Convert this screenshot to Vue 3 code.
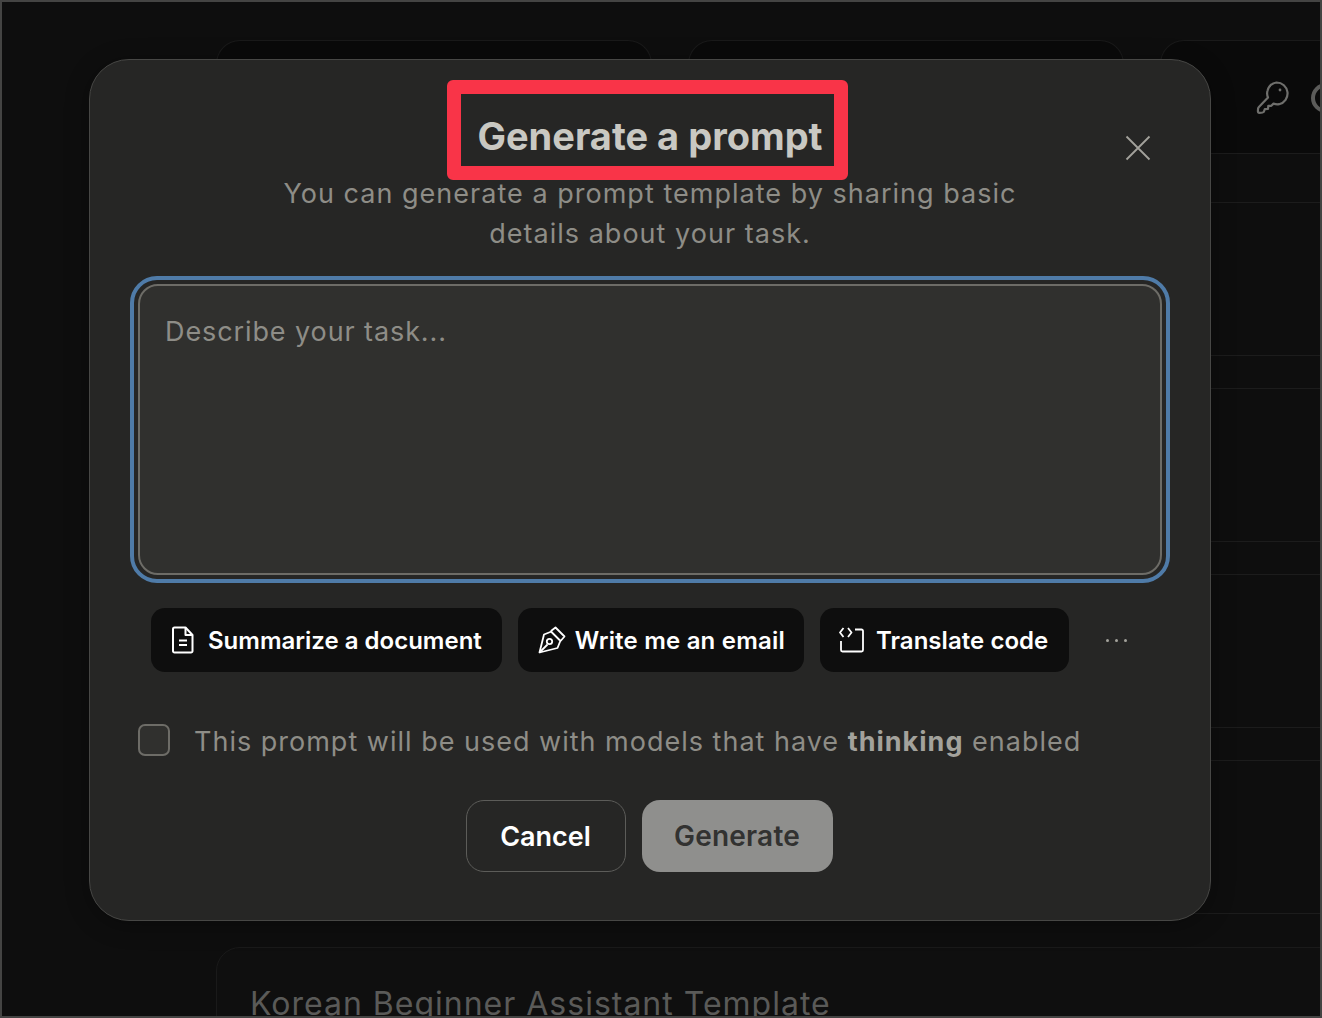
<template>
  <div class="page">
    <div class="backdrop">
      <div class="top-row">
        <div class="bg-card"></div>
        <div class="bg-card"></div>
        <div class="bg-card last">
          <svg class="key" width="36" height="36" viewBox="0 0 36 36" fill="none" stroke="#6f6f6c" stroke-width="2.2" stroke-linejoin="round" stroke-linecap="round">
            <path d="M21.500 2.500a11 11 0 0 1 2.600 21.700c-2 .4-3.700.1-5.600-.6l-2.200 2.200h-3l-.3 3.200-3.200.2-1 2.600c-.6.8-1.800 1-4.300 1-1.200 0-1.600-.7-1.600-1.800l.2-2.500c.1-.6.300-1 .8-1.500L13 17.500c-1-2.400-1.200-4.700-.4-7A11 11 0 0 1 21.500 2.500Z"/>
            <circle cx="25" cy="10" r="1.400" fill="#6f6f6c" stroke="none"/>
          </svg>
          <span class="ring"></span>
        </div>
      </div>
      <div class="rule-gap"></div>
      <div class="rule-block"></div>
      <div class="rule-block"></div>
      <div class="rule-block"></div>
      <div class="rule-block"></div>
      <div class="bottom-card">Korean Beginner Assistant Template</div>
    </div>

    <div class="overlay">
      <section class="dialog">
        <button class="close" aria-label="Close">
          <svg width="26" height="26" viewBox="0 0 26 26" fill="none" stroke="#a3a29c" stroke-width="1.800"><path d="M1.500 1.500l23 23M24.500 1.500l-23 23"/></svg>
        </button>
        <div class="title-box">
          <h2>Generate a prompt</h2>
        </div>
        <p class="subtitle">You can generate a prompt template by sharing basic<br>details about your task.</p>

        <div class="focus-ring">
          <div class="task">Describe your task...</div>
        </div>

        <div class="chips">
          <button class="chip chip-doc">
            <svg width="24" height="28" viewBox="0 0 24 28" fill="none" stroke="#fff" stroke-width="2" stroke-linejoin="round">
              <path d="M3.500 1.500h11l7 7.500v16a1.500 1.500 0 0 1-1.500 1.500H3.500A1.500 1.500 0 0 1 2 25V3a1.500 1.500 0 0 1 1.500-1.500Z"/>
              <path d="M14.500 1.500V9h7M8 14.500h8M8 19h8"/>
            </svg>
            Summarize a document
          </button>
          <button class="chip chip-pen">
            <svg width="28" height="28" viewBox="0 0 28 28" fill="none" stroke="#fff" stroke-width="1.800" stroke-linejoin="round">
              <path d="M17.500 1.500l9 9-3.500 4-1.500-.5-8-8-.2-1.300Z"/>
              <path d="M13.500 5.500L6 8.500 1.500 26.500l18-4.500 3-7.500"/>
              <path d="M1.500 26.500l8-8"/>
              <circle cx="11.500" cy="15.500" r="2.700"/>
            </svg>
            Write me an email
          </button>
          <button class="chip chip-code">
            <svg width="26" height="26" viewBox="0 0 26 26" fill="none" stroke="#fff" stroke-width="1.800" stroke-linejoin="round">
              <path d="M4.500 1L1 5.500 4.500 10M9 1l3.500 4.500L9 10"/>
              <path d="M2 14v9a1.500 1.500 0 0 0 1.500 1.500H22.500a1.500 1.500 0 0 0 1.500-1.500V4a1.500 1.500 0 0 0-1.500-1.500H16"/>
            </svg>
            Translate code
          </button>
          <span class="more" aria-hidden="true"><i></i><i></i><i></i></span>
        </div>

        <label class="thinking">
          <span class="box"></span>
          <span class="thinking-text">This prompt will be used with models that have <b>thinking</b> enabled</span>
        </label>

        <div class="actions">
          <button class="btn cancel">Cancel</button>
          <button class="btn generate">Generate</button>
        </div>
      </section>
    </div>
  </div>
</template>

<script setup>
</script>

<style>
html, body {
  margin: 0;
  background: #0f0f0f;
}
</style>

<style scoped>
.page {
  position: relative;
  box-sizing: border-box;
  width: 1322px;
  height: 1018px;
  overflow: hidden;
  border: 2px solid #444443;
  background: #0e0e0e;
  font-family: Inter, "Liberation Sans", sans-serif;
}

/* dimmed page behind the dialog */
.backdrop {
  padding: 38px 0 0 214px;
}
.top-row {
  display: flex;
  gap: 36px;
  width: 1400px;
}
.bg-card {
  flex: none;
  box-sizing: border-box;
  width: 436px;
  height: 114px;
  border: 1px solid #1a1a1a;
  border-bottom: 0;
  border-radius: 24px 24px 0 0;
  background: #0a0a0a;
}
.bg-card.last {
  display: flex;
  gap: 20px;
  align-items: flex-start;
  padding: 39px 0 0 94px;
  border-bottom: 1px solid #1c1c1c;
}
.ring {
  box-sizing: border-box;
  width: 30px;
  height: 30px;
  margin-top: 3px;
  border: 4px solid #5c5c5a;
  border-radius: 50%;
}
.rule-gap {
  height: 48px;
  border-bottom: 1px solid #1c1c1c;
}
.rule-block {
  position: relative;
  height: 152px;
  margin-bottom: 33px;
  border-bottom: 1px solid #1c1c1c;
}
.rule-block:not(:nth-last-child(2))::after {
  content: "";
  position: absolute;
  left: 0;
  right: 0;
  bottom: -34px;
  border-bottom: 1px solid #1c1c1c;
}
.bottom-card {
  box-sizing: border-box;
  width: 1200px;
  height: 120px;
  padding: 36px 0 0 33px;
  border: 1px solid #1a1a1a;
  border-radius: 24px 0 0 0;
  background: #0f0f0f;
  color: #5a5a58;
  font-size: 32px;
  line-height: 40px;
  letter-spacing: 1px;
  white-space: nowrap;
}

.overlay {
  position: absolute;
  inset: 0;
}
.dialog {
  position: absolute;
  left: 87px;
  top: 57px;
  box-sizing: border-box;
  width: 1122px;
  height: 862px;
  padding: 20px 40px 0;
  border: 1px solid #474745;
  border-radius: 40px;
  background: #262625;
  box-shadow: 0 4px 24px rgba(0, 0, 0, 0.3);
  text-align: center;
}
.close {
  position: absolute;
  right: 59px;
  top: 75px;
  padding: 0;
  border: 0;
  background: none;
  line-height: 0;
}
.title-box {
  box-sizing: border-box;
  width: 401px;
  height: 100px;
  margin-left: 317px;
  padding: 11px 0 0 5px;
  border: 14px solid #f93448;
  border-radius: 6px;
  display: flex;
  align-items: center;
  justify-content: center;
}
h2 {
  margin: 0;
  color: #c9c8c2;
  font-size: 38px;
  font-weight: 700;
  white-space: nowrap;
}
.subtitle {
  margin: -6px 0 0;
  color: #8e8d87;
  font-size: 27px;
  line-height: 40px;
  letter-spacing: 1.02px;
}
.focus-ring {
  box-sizing: border-box;
  height: 307px;
  margin-top: 22px;
  padding: 4px;
  border: 4px solid #4f7ba8;
  border-radius: 27px;
}
.task {
  box-sizing: border-box;
  height: 100%;
  padding: 27px 25px;
  border: 2px solid #6d6c67;
  border-radius: 20px;
  background: #30302e;
  color: #8e8d87;
  font-size: 27px;
  line-height: 38px;
  letter-spacing: 0.9px;
  text-align: left;
}
.chips {
  display: flex;
  gap: 16px;
  align-items: center;
  margin: 25px 0 0 21px;
}
.chip {
  display: flex;
  align-items: center;
  height: 64px;
  padding: 0 20px;
  border: 0;
  border-radius: 14px;
  background: #0e0e0e;
  color: #fff;
  font: 600 24px Inter, "Liberation Sans", sans-serif;
  white-space: nowrap;
}
.chip-doc {
  gap: 13px;
}
.chip-pen {
  gap: 9px;
  padding-right: 19px;
  letter-spacing: 0.2px;
}
.chip-code {
  gap: 11px;
  padding-left: 19px;
  padding-right: 21px;
  letter-spacing: 0.05px;
}
.more {
  display: flex;
  gap: 6px;
  margin-left: 21px;
}
.more i {
  width: 3px;
  height: 3px;
  border-radius: 50%;
  background: #a3a29c;
}
.thinking {
  display: flex;
  gap: 24px;
  align-items: center;
  margin-top: 49px;
  margin-left: 8px;
  color: #8e8d87;
  font-size: 27px;
  letter-spacing: 1px;
  white-space: nowrap;
}
.thinking-text {
  margin-top: 4px;
}
.thinking b {
  color: #a3a29c;
}
.box {
  box-sizing: border-box;
  width: 32px;
  height: 32px;
  border: 2px solid #6d6c67;
  border-radius: 7px;
  background: #30302e;
}
.actions {
  display: flex;
  gap: 16px;
  justify-content: center;
  margin-top: 42px;
  padding-right: 2px;
}
.btn {
  box-sizing: border-box;
  height: 72px;
  border-radius: 18px;
  font: 600 27px Inter, "Liberation Sans", sans-serif;
}
.cancel {
  width: 160px;
  border: 1px solid #5c5c59;
  background: transparent;
  color: #fff;
}
.generate {
  width: 191px;
  border: 0;
  background: #8f8f8d;
  color: #323231;
  font-size: 28px;
  letter-spacing: 0.2px;
}
</style>
